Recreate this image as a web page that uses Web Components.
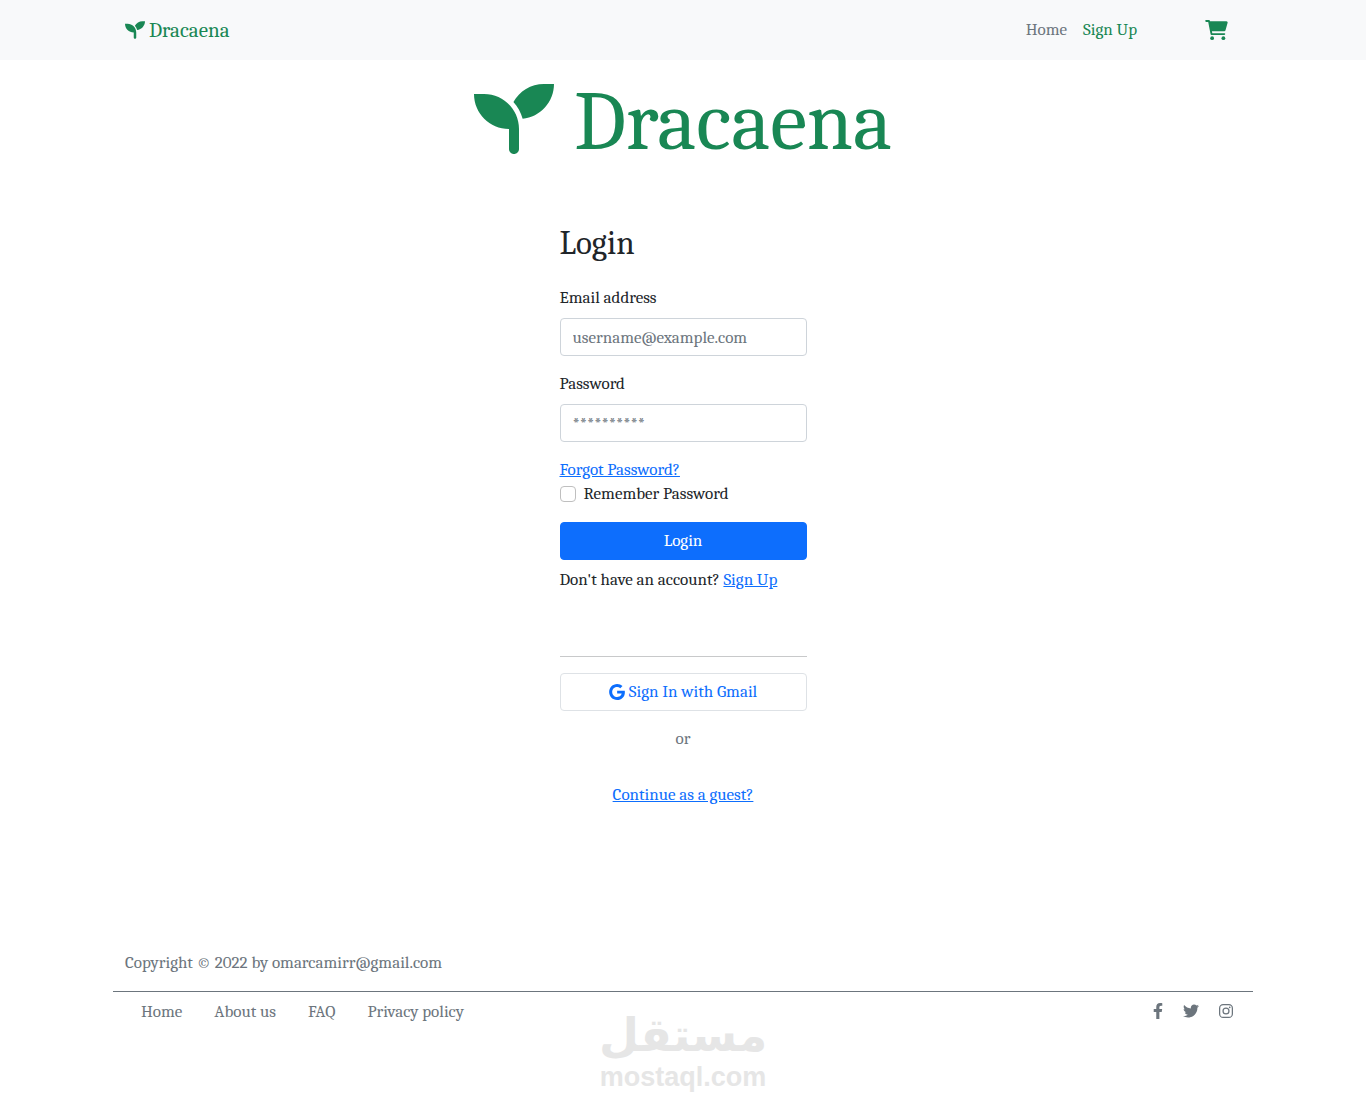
<!DOCTYPE html>
<html lang="en">
<head>
<meta charset="utf-8">
<meta name="viewport" content="width=device-width, initial-scale=1">
<title>Dracaena - Login</title>
<style>
    :root {
        --green: #198754;
        --blue: #0d6efd;
        --gray: #6c757d;
        --ink: #212529;
        --border: #ced4da;
    }
    body {
        margin: 0;
        background: #fff;
        color: var(--ink);
        font-family: Cambria, Caladea, "DejaVu Serif Condensed", serif;
        font-size: 17px;
        line-height: 24px;
    }
</style>
</head>
<body>
<dr-page>
    <dr-navbar slot="header"></dr-navbar>
    <dr-hero>Dracaena</dr-hero>
    <dr-login-form></dr-login-form>
    <dr-footer slot="footer"></dr-footer>
    <dr-watermark slot="footer"></dr-watermark>
</dr-page>

<script>
(function() {
    'use strict';

    // name -> [viewBox, markup]
    var ICONS = {
        seedling: ['0 32 512 448',
            '<path d="M64 96H0c0 123.700 100.300 224 224 224v128c0 17.700 14.300 32 32 32s32-14.300 32-32V320C288 196.300 187.700 96 64 96zm384-64c-84.200 0-157.400 46.500-195.700 115.200 27.700 30.200 48.200 66.900 59 107.600C424 243.100 512 147.900 512 32h-64z"/>'],
        cart: ['0 0 576 512',
            '<path d="M96 0c11.500 0 21.400 8.190 23.600 19.510L121.100 32H541.800c20.300 0 36.500 20.250 30.800 40.660l-54 192.040c-3.900 13.800-16.500 23.300-30.800 23.300H170.700l9.200 48H488c13.300 0 24 10.700 24 24s-10.700 24-24 24H159.100c-10.600 0-20.500-8.200-22.700-19.500L76.140 48H24C10.750 48 0 37.250 0 24S10.750 0 24 0h72z"/><circle cx="176" cy="464" r="48"/><circle cx="464" cy="464" r="48"/>'],
        google: ['0 8 488 496',
            '<path d="M488 261.800C488 403.300 391.100 504 248 504 110.800 504 0 393.200 0 256S110.800 8 248 8c66.800 0 123 24.500 166.300 64.900l-67.500 64.900C258.500 52.600 94.300 116.600 94.300 256c0 86.500 69.100 156.600 153.700 156.600 98.200 0 135-70.400 140.800-106.900H248v-85.300h236.100c2.300 12.700 3.900 24.900 3.900 41.400z"/>'],
        facebook: ['0 0 320 512',
            '<path d="M279.140 288l14.220-92.660h-88.910v-60.130c0-25.350 12.420-50.060 52.240-50.060h40.420V6.260S260.430 0 225.360 0c-73.220 0-121.080 44.380-121.080 124.720v70.620H22.890V288h81.390v224h100.170V288z"/>'],
        twitter: ['0 0 512 512',
            '<path d="M459.370 151.716c.325 4.548.325 9.097.325 13.645 0 138.720-105.583 298.558-298.558 298.558-59.452 0-114.680-17.219-161.137-47.106 8.447.974 16.568 1.299 25.340 1.299 49.055 0 94.213-16.568 130.274-44.832-46.132-.975-84.792-31.188-98.112-72.772 6.498.974 12.995 1.624 19.818 1.624 9.421 0 18.843-1.300 27.614-3.573-48.081-9.747-84.143-51.980-84.143-102.985v-1.299c13.969 7.797 30.214 12.670 47.431 13.319-28.264-18.843-46.781-51.005-46.781-87.391 0-19.492 5.197-37.360 14.294-52.954 51.655 63.675 129.300 105.258 216.365 109.807-1.624-7.797-2.599-15.918-2.599-24.040 0-57.828 46.782-104.934 104.934-104.934 30.213 0 57.502 12.670 76.670 33.137 23.715-4.548 46.456-13.320 66.599-25.340-7.798 24.366-24.366 44.833-46.132 57.827 21.117-2.273 41.584-8.122 60.426-16.243-14.292 20.791-32.161 39.308-52.628 54.253z"/>'],
        instagram: ['0 32 448 448',
            '<rect x="20" y="52" width="408" height="408" rx="112" fill="none" stroke="currentColor" stroke-width="40"/><circle cx="224" cy="256" r="95" fill="none" stroke="currentColor" stroke-width="40"/><circle cx="343" cy="137" r="27"/>']
    };

    function define(name, html, setup) {
        var template = document.createElement('template');
        template.innerHTML = html;
        customElements.define(name, class extends HTMLElement {
            constructor() {
                super();
                this.attachShadow({ mode: 'open' });
                this.shadowRoot.appendChild(template.content.cloneNode(true));
            }
            connectedCallback() {
                if (setup) setup(this);
            }
        });
    }

    /* --- Icon: <dr-icon name="cart">, sized through --w and --h --- */
    define('dr-icon', [
        '<style>',
        '  :host { display: inline-block; width: var(--w, 16px); height: var(--h, 16px); flex: none; }',
        '  svg { display: block; width: 100%; height: 100%; fill: currentColor; }',
        '</style>',
        '<svg aria-hidden="true"></svg>'
    ].join('\n'), function(el) {
        var icon = ICONS[el.getAttribute('name')];
        var svg = el.shadowRoot.querySelector('svg');
        if (!icon) return;
        svg.setAttribute('viewBox', icon[0]);
        svg.innerHTML = icon[1];
    });

    define('dr-page', [
        '<style>',
        '  :host { display: flex; flex-direction: column; min-height: 100vh; position: relative; }',
        '  main { flex: 1; padding: 0 12px; }',
        '</style>',
        '<slot name="header"></slot>',
        '<main><slot></slot></main>',
        '<slot name="footer"></slot>'
    ].join('\n'));

    define('dr-navbar', [
        '<style>',
        '  :host { display: block; background: #f8f9fa; }',
        '  nav { display: flex; align-items: center; box-sizing: border-box; max-width: 1140px; min-height: 60px; margin: 0 auto; padding: 0 12px; }',
        '  a { color: var(--green); text-decoration: none; }',
        '  .brand { display: flex; align-items: center; gap: 4px; margin-right: auto; font-size: 21px; --w: 20px; --h: 18px; }',
        '  .links { display: flex; gap: 16px; margin-right: 68px; }',
        '  .muted { color: var(--gray); }',
        '  .cart { margin-right: 13px; --w: 23px; --h: 20px; }',
        '  .cart dr-icon { display: block; }',
        '</style>',
        '<nav>',
        '  <a class="brand" href="#"><dr-icon name="seedling"></dr-icon>Dracaena</a>',
        '  <div class="links"><a class="muted" href="#">Home</a><a href="#">Sign Up</a></div>',
        '  <a class="cart" href="#" aria-label="Cart"><dr-icon name="cart"></dr-icon></a>',
        '</nav>'
    ].join('\n'));

    define('dr-hero', [
        '<style>',
        '  :host { display: flex; align-items: center; justify-content: center; gap: 20px; padding: 8px 0 10px; color: var(--green); --w: 80px; --h: 70px; }',
        '  h1 { margin: 0; padding-top: 6px; font-size: 83px; font-weight: 400; line-height: 96px; }',
        '</style>',
        '<dr-icon name="seedling"></dr-icon>',
        '<h1><slot></slot></h1>'
    ].join('\n'));

    /* --- Labelled text box --- */
    define('dr-field', [
        '<style>',
        '  :host { display: block; margin-bottom: 16px; }',
        '  label { display: block; margin-bottom: 8px; }',
        '  input { display: block; box-sizing: border-box; width: 100%; height: 38px; padding: 6px 12px; border: 1px solid var(--border); border-radius: 4px; background: #fff; color: inherit; font: inherit; }',
        '  input::placeholder { color: var(--gray); opacity: 1; }',
        '</style>',
        '<label for="box"><slot></slot></label>',
        '<input id="box">'
    ].join('\n'), function(el) {
        var input = el.shadowRoot.querySelector('input');
        input.type = el.getAttribute('type');
        input.placeholder = el.getAttribute('placeholder');
    });

    define('dr-login-form', [
        '<style>',
        '  :host { display: block; max-width: 247px; margin: 0 auto; padding: 44px 0 24px; }',
        '  h2 { margin: 0 0 24px; font-size: 33px; font-weight: 400; line-height: 38px; }',
        '  a { color: var(--blue); }',
        '  .check { display: flex; align-items: center; gap: 8px; margin-bottom: 16px; }',
        '  .check input { appearance: none; width: 16px; height: 16px; margin: 0; border: 1px solid #bfbfbf; border-radius: 4px; background: #fff; }',
        '  .check input:checked { background: var(--blue); border-color: var(--blue); }',
        '  button { display: flex; align-items: center; justify-content: center; gap: 4px; width: 100%; height: 38px; padding: 0; border: 1px solid var(--blue); border-radius: 4px; background: var(--blue); color: #fff; font: inherit; cursor: pointer; }',
        '  button.outline { border-color: #dee2e6; background: #fff; color: var(--blue); }',
        '  p { margin: 8px 0 64px; white-space: nowrap; }',
        '  hr { height: 1px; margin: 0 0 16px; border: 0; background: #c8c9ca; }',
        '  .or { margin: 16px 0 32px; color: var(--gray); text-align: center; }',
        '  .guest { text-align: center; }',
        '</style>',
        '<form>',
        '  <h2>Login</h2>',
        '  <dr-field type="email" placeholder="username@example.com">Email address</dr-field>',
        '  <dr-field type="password" placeholder="**********">Password</dr-field>',
        '  <div><a href="#">Forgot Password?</a></div>',
        '  <div class="check"><input type="checkbox" id="remember"><label for="remember">Remember Password</label></div>',
        '  <button type="submit">Login</button>',
        '  <p>Don\'t have an account? <a href="#">Sign Up</a></p>',
        '</form>',
        '<hr>',
        '<button type="button" class="outline"><dr-icon name="google"></dr-icon>Sign In with Gmail</button>',
        '<div class="or">or</div>',
        '<div class="guest"><a href="#">Continue as a guest?</a></div>'
    ].join('\n'));

    define('dr-footer', [
        '<style>',
        '  :host { display: block; box-sizing: border-box; width: 100%; max-width: 1140px; margin: 0 auto; padding-bottom: 89px; color: var(--gray); }',
        '  .copy { padding: 0 12px 16px; border-bottom: 1px solid var(--gray); }',
        '  .row { display: flex; align-items: flex-start; justify-content: space-between; padding: 8px 20px 0 28px; }',
        '  nav { display: flex; gap: 32px; }',
        '  .social { display: flex; align-items: center; gap: 20px; height: 22px; }',
        '  a { color: inherit; text-decoration: none; }',
        '  .social dr-icon { display: block; }',
        '  .narrow { --w: 10px; }',
        '  .square { --w: 14px; --h: 14px; }',
        '</style>',
        '<div class="copy">Copyright © 2022 by omarcamirr@gmail.com</div>',
        '<div class="row">',
        '  <nav><a href="#">Home</a><a href="#">About us</a><a href="#">FAQ</a><a href="#">Privacy policy</a></nav>',
        '  <div class="social">',
        '    <a class="narrow" href="#" aria-label="Facebook"><dr-icon name="facebook"></dr-icon></a>',
        '    <a href="#" aria-label="Twitter"><dr-icon name="twitter"></dr-icon></a>',
        '    <a class="square" href="#" aria-label="Instagram"><dr-icon name="instagram"></dr-icon></a>',
        '  </div>',
        '</div>'
    ].join('\n'));

    /* --- Watermark, lies over the foot of the page --- */
    define('dr-watermark', [
        '<style>',
        '  :host { position: absolute; left: 0; right: 0; bottom: 20px; display: flex; flex-direction: column; align-items: center; color: #e6e6e6; font-weight: 700; pointer-events: none; }',
        '  .ar { font-family: "DejaVu Sans", sans-serif; font-size: 46px; line-height: 52px; }',
        '  .en { font-family: "Liberation Sans", Arial, sans-serif; font-size: 27px; line-height: 32px; }',
        '</style>',
        '<span class="ar" lang="ar" dir="rtl">مستقل</span>',
        '<span class="en">mostaql.com</span>'
    ].join('\n'));

})();
</script>
</body>
</html>
